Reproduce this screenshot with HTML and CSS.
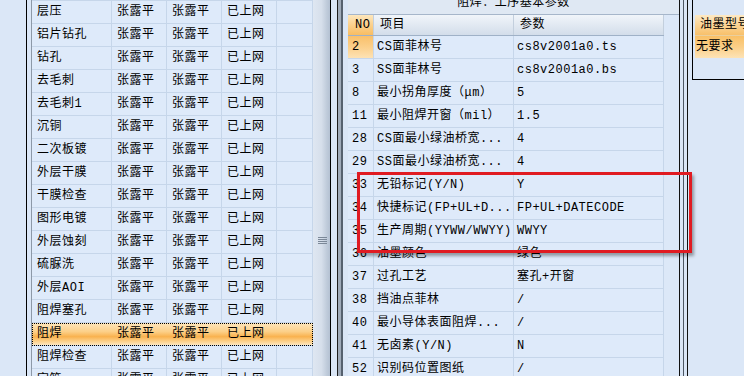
FILE: index.html
```html
<!DOCTYPE html>
<html lang="zh-CN">
<head>
  <meta charset="UTF-8" />
  <title>工序基本参数</title>
  <link rel="stylesheet" href="styles.css">
</head>
<body>
  <div class="gutter"></div>
  <div class="frame-left"></div>

  <div class="list">
    <div class="row"><span>层压</span><span>张露平</span><span>张露平</span><span>已上网</span><span></span></div>
    <div class="row"><span>铝片钻孔</span><span>张露平</span><span>张露平</span><span>已上网</span><span></span></div>
    <div class="row"><span>钻孔</span><span>张露平</span><span>张露平</span><span>已上网</span><span></span></div>
    <div class="row"><span>去毛刺</span><span>张露平</span><span>张露平</span><span>已上网</span><span></span></div>
    <div class="row"><span>去毛刺1</span><span>张露平</span><span>张露平</span><span>已上网</span><span></span></div>
    <div class="row"><span>沉铜</span><span>张露平</span><span>张露平</span><span>已上网</span><span></span></div>
    <div class="row"><span>二次板镀</span><span>张露平</span><span>张露平</span><span>已上网</span><span></span></div>
    <div class="row"><span>外层干膜</span><span>张露平</span><span>张露平</span><span>已上网</span><span></span></div>
    <div class="row"><span>干膜检查</span><span>张露平</span><span>张露平</span><span>已上网</span><span></span></div>
    <div class="row"><span>图形电镀</span><span>张露平</span><span>张露平</span><span>已上网</span><span></span></div>
    <div class="row"><span>外层蚀刻</span><span>张露平</span><span>张露平</span><span>已上网</span><span></span></div>
    <div class="row"><span>硫脲洗</span><span>张露平</span><span>张露平</span><span>已上网</span><span></span></div>
    <div class="row"><span>外层AOI</span><span>张露平</span><span>张露平</span><span>已上网</span><span></span></div>
    <div class="row"><span>阻焊塞孔</span><span>张露平</span><span>张露平</span><span>已上网</span><span></span></div>
    <div class="row selected"><span>阻焊</span><span>张露平</span><span>张露平</span><span>已上网</span><span></span></div>
    <div class="row"><span>阻焊检查</span><span>张露平</span><span>张露平</span><span>已上网</span><span></span></div>
    <div class="row"><span>字符</span><span>张露平</span><span>张露平</span><span>已上网</span><span></span></div>
  </div>

  <div class="splitter"><div class="grip"></div></div>
  <div class="frame-mid"></div>

  <div class="params">
    <div class="title">阻焊：工序基本参数</div>
    <div class="head"><span class="no">NO</span><span>项目</span><span>参数</span></div>
    <div class="prow"><span class="no current">2</span><span>CS面菲林号</span><span>cs8v2001a0.ts</span></div>
    <div class="prow"><span class="no">3</span><span>SS面菲林号</span><span>cs8v2001a0.bs</span></div>
    <div class="prow"><span class="no">8</span><span>最小拐角厚度（μm）</span><span>5</span></div>
    <div class="prow"><span class="no">11</span><span>最小阻焊开窗（mil）</span><span>1.5</span></div>
    <div class="prow"><span class="no">28</span><span>CS面最小绿油桥宽...</span><span>4</span></div>
    <div class="prow"><span class="no">29</span><span>SS面最小绿油桥宽...</span><span>4</span></div>
    <div class="prow"><span class="no">33</span><span>无铅标记(Y/N)</span><span>Y</span></div>
    <div class="prow"><span class="no">34</span><span>快捷标记(FP+UL+D...</span><span>FP+UL+DATECODE</span></div>
    <div class="prow"><span class="no">35</span><span>生产周期(YYWW/WWYY)</span><span>WWYY</span></div>
    <div class="prow"><span class="no">36</span><span>油墨颜色</span><span>绿色</span></div>
    <div class="prow"><span class="no">37</span><span>过孔工艺</span><span>塞孔+开窗</span></div>
    <div class="prow"><span class="no">38</span><span>挡油点菲林</span><span>/</span></div>
    <div class="prow"><span class="no">40</span><span>最小导体表面阻焊...</span><span>/</span></div>
    <div class="prow"><span class="no">41</span><span>无卤素(Y/N)</span><span>N</span></div>
    <div class="prow"><span class="no">52</span><span>识别码位置图纸</span><span>/</span></div>
  </div>

  <div class="frame-right"></div>

  <div class="ink">
    <div class="ink-box">
      <div class="ink-head">油墨型号</div>
      <div class="ink-row">无要求</div>
    </div>
  </div>

  <!-- red annotation box drawn over the grid -->
  <div class="mark"></div>
</body>
</html>
```

FILE: styles.css
```css
body {
  margin: 0;
  width: 744px;
  height: 376px;
  overflow: hidden;
  display: flex;
  align-items: flex-start;
  background: #dbe7f7;
  color: #000;
  font-family: "Liberation Mono", "Noto Sans CJK SC", monospace;
  font-size: 12px;
  letter-spacing: 0.5px;
}

body > div {
  flex-shrink: 0;
}

.gutter {
  width: 26px;
  height: 376px;
}

.frame-left {
  width: 6px;
  height: 376px;
  box-sizing: border-box;
  border-left: 1px solid #000;
  border-right: 1px solid #8d99a8;
}

/* process list */
.list {
  width: 281px;
  border-top: 1px solid #c6d6ea;
}

.row {
  display: flex;
  height: 22px;
  border-bottom: 1px solid #c6d6ea;
  background: #deeafa;
}

.row span {
  box-sizing: border-box;
  height: 22px;
  line-height: 22px;
  padding-left: 5px;
  border-right: 1px solid #c6d6ea;
  white-space: nowrap;
}

.row span:nth-child(1) { width: 80px; }
.row span:nth-child(2),
.row span:nth-child(3),
.row span:nth-child(4) { width: 55px; }
.row span:nth-child(5) { width: 36px; }

.row.selected {
  background: linear-gradient(to bottom, #fde6bd 0%, #fccf87 40%, #f9b24f 62%, #fcd390 85%, #fde6bf 100%);
  outline: 1px dotted #000;
  outline-offset: -1px;
}

.row.selected span {
  border-right-color: transparent;
}

/* splitter */
.splitter {
  width: 17px;
  height: 376px;
  background: linear-gradient(to right, #dfe7f2 0%, #d6dfeb 50%, #c0ccdb 80%, #b4c1d2 100%);
}

.grip {
  width: 9px;
  height: 8px;
  margin: 237px 0 0 5px;
  background: repeating-linear-gradient(to bottom, #7b8898 0, #7b8898 1px, transparent 1px, transparent 2px);
}

.frame-mid {
  width: 18px;
  height: 376px;
  background: linear-gradient(to right,
    #000 0, #000 1px,
    #dae6f6 1px, #dae6f6 7px,
    #1d1d1d 7px, #1d1d1d 8px,
    #a0abb9 8px, #a0abb9 11px,
    #56616e 11px, #56616e 13px,
    #dae6f6 13px);
}

/* parameter grid */
.params {
  width: 331px;
  height: 376px;
  background: #dce8f8;
}

.title {
  height: 14px;
  line-height: 6px;
  overflow: hidden;
  text-align: center;
  background: #dfe8f3;
  border-bottom: 1px solid #a6b6ca;
}

.head {
  display: flex;
  width: 316px;
  height: 20px;
  border-bottom: 1px solid #9fb1c7;
  background: linear-gradient(to bottom, #f1f5fa 0%, #e2e9f2 50%, #d3ddea 100%);
}

.head span {
  box-sizing: border-box;
  line-height: 20px;
  padding-left: 6px;
  border-right: 1px solid #c3cfdd;
}

.head span.no {
  padding-left: 7px;
  background: linear-gradient(to bottom, #fde7bd 0%, #fbd08c 50%, #f8bd62 100%);
}

.prow {
  display: flex;
  width: 316px;
  height: 22px;
  border-bottom: 1px solid #c6d6ea;
  background: #deeafa;
}

.prow span {
  box-sizing: border-box;
  line-height: 22px;
  padding-left: 3px;
  border-right: 1px solid #c6d6ea;
  white-space: nowrap;
}

.head span:nth-child(1),
.prow span:nth-child(1) { width: 26px; }
.head span:nth-child(2),
.prow span:nth-child(2) { width: 140px; }
.head span:nth-child(3),
.prow span:nth-child(3) { width: 150px; }

.prow span.no {
  padding-left: 4px;
}

.prow span.current {
  background: linear-gradient(to bottom, #f9c06a 0%, #fbcf8a 50%, #fde2b4 100%);
}

.frame-right {
  width: 9px;
  height: 376px;
  background: linear-gradient(to right,
    #111 0, #111 1px,
    #dae6f6 1px, #dae6f6 4px,
    #4d5764 4px, #4d5764 5px,
    #dae6f6 5px, #dae6f6 8px,
    #111 8px, #111 9px);
}

/* ink model box */
.ink {
  flex: 1;
  height: 376px;
  padding-left: 4px;
}

.ink-box {
  height: 64px;
  padding: 15px 0 0 2px;
  border-left: 1px solid #000;
  border-bottom: 1px solid #000;
}

.ink-head {
  height: 20px;
  line-height: 20px;
  padding-left: 5px;
  border-bottom: 1px solid #e9cf9f;
  background: linear-gradient(to bottom, #fde9c4 0%, #fbd495 50%, #f8c06a 100%);
  white-space: nowrap;
}

.ink-row {
  height: 22px;
  line-height: 22px;
  padding-left: 1px;
  background: linear-gradient(to bottom, #f9c066 0%, #fbcf88 50%, #fde3b6 100%);
  white-space: nowrap;
}

.mark {
  position: absolute;
  left: 357px;
  top: 172px;
  width: 329px;
  height: 75px;
  border: 3px solid #e01b22;
  box-shadow: 2px 3px 3px rgba(0, 0, 0, 0.35);
}
```
